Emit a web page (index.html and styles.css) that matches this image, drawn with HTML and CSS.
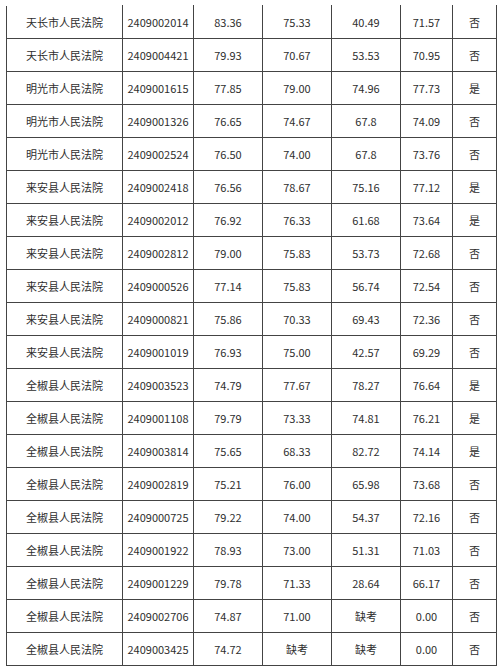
FILE: index.html
```html
<!DOCTYPE html>
<html lang="zh-CN">
<head>
<meta charset="utf-8">
<title>成绩表</title>
<link rel="stylesheet" href="styles.css">
</head>
<body>
<table class="scores">
<colgroup>
<col class="c-court"><col class="c-id"><col class="c-n"><col class="c-n"><col class="c-n"><col class="c-t"><col class="c-y">
</colgroup>
<tbody>
<tr><td>天长市人民法院</td><td>2409002014</td><td>83.36</td><td>75.33</td><td>40.49</td><td>71.57</td><td>否</td></tr>
<tr><td>天长市人民法院</td><td>2409004421</td><td>79.93</td><td>70.67</td><td>53.53</td><td>70.95</td><td>否</td></tr>
<tr><td>明光市人民法院</td><td>2409001615</td><td>77.85</td><td>79.00</td><td>74.96</td><td>77.73</td><td>是</td></tr>
<tr><td>明光市人民法院</td><td>2409001326</td><td>76.65</td><td>74.67</td><td>67.8</td><td>74.09</td><td>否</td></tr>
<tr><td>明光市人民法院</td><td>2409002524</td><td>76.50</td><td>74.00</td><td>67.8</td><td>73.76</td><td>否</td></tr>
<tr><td>来安县人民法院</td><td>2409002418</td><td>76.56</td><td>78.67</td><td>75.16</td><td>77.12</td><td>是</td></tr>
<tr><td>来安县人民法院</td><td>2409002012</td><td>76.92</td><td>76.33</td><td>61.68</td><td>73.64</td><td>是</td></tr>
<tr><td>来安县人民法院</td><td>2409002812</td><td>79.00</td><td>75.83</td><td>53.73</td><td>72.68</td><td>否</td></tr>
<tr><td>来安县人民法院</td><td>2409000526</td><td>77.14</td><td>75.83</td><td>56.74</td><td>72.54</td><td>否</td></tr>
<tr><td>来安县人民法院</td><td>2409000821</td><td>75.86</td><td>70.33</td><td>69.43</td><td>72.36</td><td>否</td></tr>
<tr><td>来安县人民法院</td><td>2409001019</td><td>76.93</td><td>75.00</td><td>42.57</td><td>69.29</td><td>否</td></tr>
<tr><td>全椒县人民法院</td><td>2409003523</td><td>74.79</td><td>77.67</td><td>78.27</td><td>76.64</td><td>是</td></tr>
<tr><td>全椒县人民法院</td><td>2409001108</td><td>79.79</td><td>73.33</td><td>74.81</td><td>76.21</td><td>是</td></tr>
<tr><td>全椒县人民法院</td><td>2409003814</td><td>75.65</td><td>68.33</td><td>82.72</td><td>74.14</td><td>是</td></tr>
<tr><td>全椒县人民法院</td><td>2409002819</td><td>75.21</td><td>76.00</td><td>65.98</td><td>73.68</td><td>否</td></tr>
<tr><td>全椒县人民法院</td><td>2409000725</td><td>79.22</td><td>74.00</td><td>54.37</td><td>72.16</td><td>否</td></tr>
<tr><td>全椒县人民法院</td><td>2409001922</td><td>78.93</td><td>73.00</td><td>51.31</td><td>71.03</td><td>否</td></tr>
<tr><td>全椒县人民法院</td><td>2409001229</td><td>79.78</td><td>71.33</td><td>28.64</td><td>66.17</td><td>否</td></tr>
<tr><td>全椒县人民法院</td><td>2409002706</td><td>74.87</td><td>71.00</td><td>缺考</td><td>0.00</td><td>否</td></tr>
<tr><td>全椒县人民法院</td><td>2409003425</td><td>74.72</td><td>缺考</td><td>缺考</td><td>0.00</td><td>否</td></tr>
</tbody>
</table>
</body>
</html>
```
FILE: styles.css
```css
html, body {
  margin: 0;
  padding: 0;
  background: #ffffff;
}

.scores {
  margin: 5px 0 0 6px;
  width: 491px;
  table-layout: fixed;
  border-collapse: collapse;
  font-family: "Noto Sans CJK SC", "Noto Sans", sans-serif;
  font-size: 11px;
  color: #2e2e2e;
}

.c-court { width: 116px; }
.c-id { width: 71px; }
.c-n { width: 69px; }
.c-t { width: 52px; }
.c-y { width: 44px; }

.scores td {
  height: 32px;
  padding: 0;
  border: 1px solid #444444;
  text-align: center;
  vertical-align: middle;
  white-space: nowrap;
  line-height: 1;
}

.scores tr:first-child td {
  border-top: 1px solid #ffffff;
}
```
